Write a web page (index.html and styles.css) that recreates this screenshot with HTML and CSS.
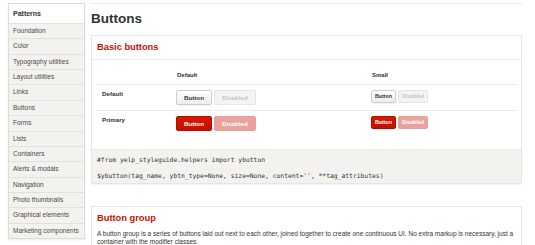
FILE: index.html
```html
<!DOCTYPE html>
<html lang="en">

<head>
    <meta charset="UTF-8">
    <title>Buttons - Styleguide</title>
    <link rel="stylesheet" href="styles.css">
</head>

<body>
    <div class="page">
        <nav class="sidebar">
            <div class="sidebar-title">Patterns</div>
            <ul class="sidebar-list">
                <li>Foundation</li>
                <li>Color</li>
                <li>Typography utilities</li>
                <li>Layout utilities</li>
                <li>Links</li>
                <li>Buttons</li>
                <li>Forms</li>
                <li>Lists</li>
                <li>Containers</li>
                <li>Alerts &amp; modals</li>
                <li>Navigation</li>
                <li>Photo thumbnails</li>
                <li>Graphical elements</li>
                <li>Marketing components</li>
            </ul>
        </nav>

        <main class="content">
            <h1 class="page-title">Buttons</h1>

            <section class="card">
                <h2 class="card-title card-title-ruled">Basic buttons</h2>
                <div class="card-body">
                    <table class="demo-table">
                        <tr>
                            <th class="col-label"></th>
                            <th class="col-default">Default</th>
                            <th>Small</th>
                        </tr>
                        <tr>
                            <td class="row-label">Default</td>
                            <td>
                                <div class="btn-set">
                                    <button class="ybtn">Button</button>
                                    <button class="ybtn" disabled>Disabled</button>
                                </div>
                            </td>
                            <td>
                                <div class="btn-set">
                                    <button class="ybtn ybtn-small">Button</button>
                                    <button class="ybtn ybtn-small" disabled>Disabled</button>
                                </div>
                            </td>
                        </tr>
                        <tr>
                            <td class="row-label">Primary</td>
                            <td>
                                <div class="btn-set">
                                    <button class="ybtn ybtn-primary">Button</button>
                                    <button class="ybtn ybtn-primary" disabled>Disabled</button>
                                </div>
                            </td>
                            <td>
                                <div class="btn-set">
                                    <button class="ybtn ybtn-primary ybtn-small">Button</button>
                                    <button class="ybtn ybtn-primary ybtn-small" disabled>Disabled</button>
                                </div>
                            </td>
                        </tr>
                    </table>
                </div>
                <pre class="code">#from yelp_styleguide.helpers import ybutton
$ybutton(tag_name, ybtn_type=None, size=None, content='', **tag_attributes)</pre>
            </section>

            <section class="card">
                <h2 class="card-title">Button group</h2>
                <p class="card-text">A button group is a series of buttons laid out next to each other, joined together to create one continuous UI. No extra markup is necessary, just a container with the modifier classes.</p>
            </section>
        </main>
    </div>
</body>

</html>
```

FILE: styles.css
```css
body {
    margin: 0;
    font-family: "Liberation Sans", Arial, sans-serif;
    color: #333;
    background-color: #fff;
    overflow: hidden;
}

.page {
    display: flex;
    align-items: flex-start;
    padding: 3px 0 0 8px;
}

/* sidebar */
.sidebar {
    width: 77px;
    flex-shrink: 0;
    box-sizing: border-box;
    border: 1px solid #dcdcd8;
    box-shadow: 0 1px 2px rgba(0, 0, 0, 0.08);
    background-color: #f3f2ee;
}

.sidebar-title {
    height: 19px;
    line-height: 19px;
    padding-left: 4px;
    font-size: 7px;
    font-weight: bold;
    background-color: #fff;
}

.sidebar-list {
    list-style: none;
    margin: 0;
    padding: 0;
}

.sidebar-list li {
    height: 15.36px;
    line-height: 14.36px;
    box-sizing: border-box;
    border-top: 1px solid #e2e1dc;
    padding-left: 4px;
    font-size: 6.5px;
    color: #4a4a4a;
    white-space: nowrap;
}

/* main column */
.content {
    width: 431px;
    margin-left: 6px;
    border-top: 1px solid #eeeeec;
}

.page-title {
    margin: 8px 0 9px;
    font-size: 13.5px;
    line-height: 13.5px;
    font-weight: bold;
    color: #333;
}

.card {
    border: 1px solid #e6e6e3;
    box-shadow: 0 1px 1px rgba(0, 0, 0, 0.04);
    margin-bottom: 22px;
    background-color: #fff;
}

.card-title {
    margin: 0;
    padding: 5px 5px 6px;
    font-size: 9.3px;
    line-height: 12px;
    font-weight: bold;
    color: #c41200;
}

.card-title-ruled {
    border-bottom: 1px solid #ebebe8;
    padding-bottom: 6px;
}

.card-body {
    padding: 10px 4px 13px;
}

.demo-table {
    width: 421px;
    border-collapse: collapse;
}

.demo-table th {
    text-align: left;
    font-size: 6px;
    line-height: 10px;
    padding: 0 6px 4px;
    font-weight: bold;
}

.demo-table .col-label {
    width: 63px;
}

.demo-table .col-default {
    width: 183px;
}

.demo-table td {
    border-top: 1px solid #ebebe8;
    padding: 5px 6px 5px 5px;
    vertical-align: top;
}

.demo-table .row-label {
    padding-left: 6px;
    font-size: 6.2px;
    line-height: 8px;
    font-weight: bold;
}

.btn-set {
    display: flex;
    align-items: flex-start;
    gap: 2px;
    height: 15px;
}

/* buttons */
.ybtn {
    display: block;
    margin: 0;
    padding: 0 7px;
    height: 15px;
    line-height: 13px;
    font-family: "Liberation Sans", Arial, sans-serif;
    font-size: 6.2px;
    font-weight: bold;
    color: #333;
    border: 1px solid #cfcfcf;
    border-radius: 2px;
    background: linear-gradient(#ffffff, #ececec);
    box-shadow: 0 1px 1px rgba(0, 0, 0, 0.06);
}

.ybtn:disabled {
    color: #c5c5c5;
    border-color: #e4e4e4;
    background: #f4f4f4;
    box-shadow: none;
}

.ybtn-primary {
    color: #fff;
    border-color: #b40e00;
    background: linear-gradient(#d81800, #c21100);
}

.ybtn-primary:disabled {
    color: #fff;
    border-color: #e6a09a;
    background: #e9a29d;
}

.ybtn-small {
    height: 13px;
    line-height: 11px;
    padding: 0 3px;
    font-size: 5.3px;
}

/* code sample */
.code {
    margin: 0;
    padding: 2px 5px 0;
    font-family: "DejaVu Sans Mono", "Liberation Mono", monospace;
    font-size: 6.35px;
    line-height: 16px;
    color: #333;
    background-color: #f3f2ee;
    border-top: 1px solid #ebeae6;
    box-sizing: border-box;
    height: 34px;
}

.card-text {
    margin: 0;
    padding: 0 5px;
    font-size: 6.5px;
    line-height: 8.5px;
}
```
